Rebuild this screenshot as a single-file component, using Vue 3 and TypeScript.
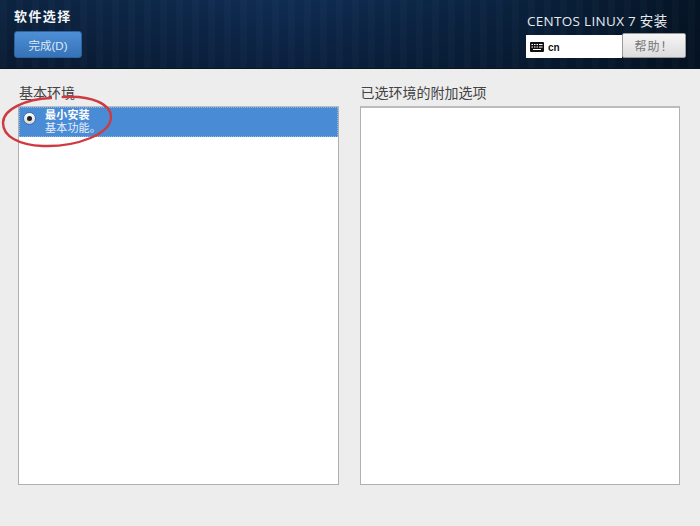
<template>
  <div class="screen">
    <header class="topbar">
      <div class="top-left">
        <h1>软件选择</h1>
        <button class="btn-done">完成(D)</button>
      </div>
      <div class="top-right">
        <div class="product">CENTOS LINUX 7 安装</div>
        <div class="tools">
          <div class="kbd-box">
            <svg class="kbd-icon" width="14" height="10" viewBox="0 0 14 10">
              <rect x="0" y="0" width="14" height="10" rx="1" fill="#111" />
              <path d="M1.5 2.5h1.5M4 2.5h1.5M6.5 2.5h1.5M9 2.5h3.5M1.5 5h1.5M4 5h1.5M6.5 5h1.5M9 5h3.5M3 7.5h8" stroke="#fff" stroke-width="1" fill="none" />
            </svg>
            <span>cn</span>
          </div>
          <button class="btn-help">帮助！</button>
        </div>
      </div>
    </header>

    <main class="content">
      <section class="col">
        <h2>基本环境</h2>
        <div class="list">
          <div class="row selected">
            <span class="radio"><i></i></span>
            <div class="row-text">
              <strong>最小安装</strong>
              <span>基本功能。</span>
            </div>
          </div>
        </div>
      </section>
      <section class="col">
        <h2>已选环境的附加选项</h2>
        <div class="list"></div>
      </section>
    </main>

    <svg class="mark" width="116" height="60" viewBox="0 0 116 60">
      <path d="M62 3C90 1 110 10 110 23C110 40 76 53 42 52C17 51 2 42 2 29C2 15 25 5 50 4" fill="none" stroke="#cf3a40" stroke-width="2.4" stroke-linecap="round" />
    </svg>
  </div>
</template>

<script setup lang="ts">
</script>

<style>
html,
body {
  margin: 0;
  background: #ededed;
}
</style>

<style scoped>
.screen {
  position: relative;
  width: 700px;
  height: 526px;
  overflow: hidden;
  background: #ededed;
  font-family: "Liberation Sans", "Noto Sans CJK SC", sans-serif;
}

.topbar {
  height: 69px;
  box-sizing: border-box;
  display: flex;
  justify-content: space-between;
  padding: 8px 14px 0 14px;
  background:
    repeating-linear-gradient(90deg, rgba(255, 255, 255, 0.014) 0 7px, rgba(0, 0, 0, 0.03) 7px 16px),
    linear-gradient(180deg, rgba(6, 20, 40, 0.1), rgba(4, 14, 30, 0.45)),
    linear-gradient(90deg, #0d2644 0%, #10305a 40%, #0b2644 72%, #051526 100%);
  border-bottom: 1px solid #0a1420;
}

.top-left h1 {
  margin: 0 0 6px;
  font-size: 13px;
  line-height: 17px;
  font-weight: 700;
  letter-spacing: 1.4px;
  color: #f4f6f8;
}

.btn-done {
  display: block;
  width: 68px;
  height: 27px;
  padding: 0;
  border: 1px solid #2c639f;
  border-radius: 3px;
  background: linear-gradient(180deg, #4d8fd6, #3672b8);
  color: #dfe9f5;
  font-family: inherit;
  font-size: 11.5px;
}

.top-right {
  width: 160px;
}

.product {
  margin: 4px 0 0 1px;
  font-family: "Open Sans", "Noto Sans CJK SC", sans-serif;
  font-size: 13.5px;
  letter-spacing: 0.3px;
  line-height: 18px;
  color: #e6eaee;
  white-space: nowrap;
}

.tools {
  display: flex;
  align-items: flex-start;
  margin-top: 3px;
}

.kbd-box {
  width: 96px;
  height: 23px;
  margin-top: 2px;
  box-sizing: border-box;
  display: flex;
  align-items: center;
  gap: 4px;
  padding: 1px 0 0 4px;
  background: #fff;
  font-size: 10px;
  font-weight: 700;
  color: #111;
}

.btn-help {
  width: 64px;
  height: 25px;
  padding: 0;
  border: 1px solid #9a9a9a;
  border-radius: 2px;
  background: linear-gradient(180deg, #f6f6f6, #dcdcdc);
  color: #777;
  font-family: inherit;
  font-size: 12px;
  letter-spacing: 1px;
}

.content {
  display: flex;
  gap: 21px;
  padding: 15px 20px 0 18px;
}

.col {
  flex: 1;
  min-width: 0;
}

.col h2 {
  margin: 0 0 4px;
  padding-left: 1px;
  font-size: 14px;
  line-height: 18px;
  font-weight: 400;
  color: #444;
}

.list {
  height: 376px;
  background: #fff;
  border: 1px solid #b0b0b0;
  border-top: 2px solid #bcbcbc;
}

.row {
  display: flex;
  align-items: flex-start;
  height: 30px;
  margin-top: -1px;
  box-sizing: border-box;
}

.row.selected {
  background: #4a8bd6;
  border: 1px dotted #8db6e6;
  color: #fff;
}

.radio {
  flex: none;
  width: 11px;
  height: 11px;
  margin: 4px 9px 0 3px;
  border-radius: 50%;
  background: linear-gradient(180deg, #fff, #d5d5d5);
  border: 1px solid #3d6ea8;
  display: flex;
  align-items: center;
  justify-content: center;
}

.radio i {
  width: 5px;
  height: 5px;
  border-radius: 50%;
  background: #222;
}

.row-text {
  display: flex;
  flex-direction: column;
  font-size: 11px;
  line-height: 13px;
  padding-top: 1px;
}

.row-text strong {
  letter-spacing: 0.2px;
}

.row-text span {
  color: #e6effa;
  letter-spacing: 0.2px;
}

.mark {
  position: absolute;
  left: 1px;
  top: 94px;
  pointer-events: none;
}
</style>
